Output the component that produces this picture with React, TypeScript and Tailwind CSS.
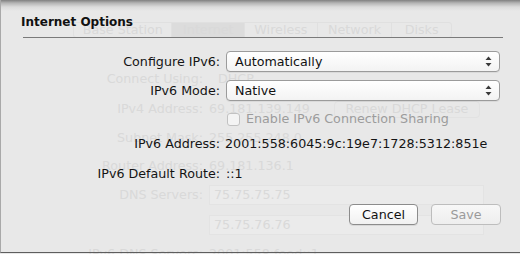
import React from 'react';

const ghost = "text-[#d9d9d9]";

function StepperArrows() {
  return (
    <svg width="7" height="11" viewBox="0 0 7 11" className="shrink-0">
      <path d="M3.5 0.5 L6.5 4 L0.5 4 Z" fill="#3a3a3a" />
      <path d="M3.5 10.5 L6.5 7 L0.5 7 Z" fill="#3a3a3a" />
    </svg>
  );
}

function PopUp({ value }: { value: string }) {
  return (
    <div className="ml-[6px] flex h-[21px] w-[274px] items-center justify-between rounded-[4px] border border-[#9b9b9b] bg-[linear-gradient(to_bottom,#ffffff,#f3f3f3)] pl-[8px] pr-[7px] shadow-[0_1px_0_rgba(0,0,0,0.06)]">
      <span className="text-[#111]">{value}</span>
      <StepperArrows />
    </div>
  );
}

function GhostRow({ label, children, className = "" }: { label: string; children: React.ReactNode; className?: string }) {
  return (
    <div className={`flex h-[20px] items-center ${className}`}>
      <div className={`w-[203px] text-right ${ghost}`}>{label}</div>
      <div className="ml-[6px] flex items-center">{children}</div>
    </div>
  );
}

// the window behind the sheet, faded out
function BackgroundWindow() {
  const tabs = [
    { name: "Base Station", w: "w-[99px]", on: false },
    { name: "Internet", w: "w-[73px]", on: true },
    { name: "Wireless", w: "w-[73px]", on: false },
    { name: "Network", w: "w-[75px]", on: false },
    { name: "Disks", w: "w-[59px]", on: false },
  ];
  return (
    <div className="flex flex-col pt-[22px] leading-[16px]">
      <div className="ml-[73px] flex h-[16px] w-[379px] overflow-hidden rounded-[3px] border border-[#e0e0e0]">
        {tabs.map((t) => (
          <div
            key={t.name}
            className={`${t.w} flex items-center justify-center border-r border-[#e0e0e0] last:border-r-0 ${t.on ? "bg-[#dcdcdc]" : ""} ${ghost}`}
          >
            {t.name}
          </div>
        ))}
      </div>
      <GhostRow label="Connect Using:" className="mt-[31px]">
        <span className={`ml-[9px] ${ghost}`}>DHCP</span>
      </GhostRow>
      <GhostRow label="IPv4 Address:" className="mt-[10px]">
        <span className={ghost}>69.181.139.149</span>
        <div className={`ml-[24px] flex h-[17px] w-[146px] items-center justify-center rounded-[4px] border border-[#e2e2e2] ${ghost}`}>
          Renew DHCP Lease
        </div>
      </GhostRow>
      <GhostRow label="Subnet Mask:" className="mt-[9px]">
        <span className={ghost}>255.255.248.0</span>
      </GhostRow>
      <GhostRow label="Router Address:" className="mt-[8px]">
        <span className={ghost}>69.181.136.1</span>
      </GhostRow>
      <GhostRow label="DNS Servers:" className="mt-[9px]">
        <div className={`flex h-[20px] w-[275px] items-center border border-[#e3e3e3] bg-[#ebebeb] pl-[4px] ${ghost}`}>75.75.75.75</div>
      </GhostRow>
      <GhostRow label="" className="mt-[10px]">
        <div className={`flex h-[20px] w-[275px] items-center border border-[#e3e3e3] bg-[#ebebeb] pl-[4px] ${ghost}`}>75.75.76.76</div>
      </GhostRow>
      <GhostRow label="IPv6 DNS Servers:" className="mt-[9px]">
        <span className={ghost}>2001:558:feed::1</span>
      </GhostRow>
    </div>
  );
}

export default function App() {
  return (
    <div className="relative h-[254px] w-[520px] overflow-hidden bg-[#e8e8e8] font-['DejaVu_Sans',sans-serif] text-[12.7px] text-[#141414]">
      <BackgroundWindow />

      {/* sheet */}
      <div className="absolute inset-x-0 top-0 h-[253px] border-b border-l border-b-[#5e5e5e] border-l-[#a9a9a9] bg-[linear-gradient(to_bottom,#808080_0px,#b4b4b4_3px,#dcdcdc_7px,rgba(232,232,232,0)_11px)]">
        <div className="flex flex-col leading-[16px]">
          <div className="pl-[20px] pt-[14px] text-[12px] font-bold text-[#111]">Internet Options</div>
          <div className="ml-[22px] mt-[7px] w-[480px] border-t border-[#7a7a7a]" />

          <div className="mt-[13px] flex items-center">
            <div className="w-[219px] text-right">Configure IPv6:</div>
            <PopUp value="Automatically" />
          </div>
          <div className="mt-[8px] flex items-center">
            <div className="w-[219px] text-right">IPv6 Mode:</div>
            <PopUp value="Native" />
          </div>

          <div className="mt-[11px] flex h-[14px] items-center pl-[226px]">
            <div className="h-[13px] w-[13px] rounded-[3px] border border-[#c2c2c2] bg-[#f4f4f4]" />
            <span className="ml-[6px] text-[#9c9c9c]">Enable IPv6 Connection Sharing</span>
          </div>

          <div className="mt-[10px] flex items-center">
            <div className="w-[219px] text-right">IPv6 Address:</div>
            <span className="ml-[5px]">2001:558:6045:9c:19e7:1728:5312:851e</span>
          </div>
          <div className="mt-[14px] flex items-center">
            <div className="w-[219px] text-right">IPv6 Default Route:</div>
            <span className="ml-[6px]">::1</span>
          </div>

          <div className="mt-[22px] flex justify-end gap-[13px] pr-[19px]">
            <button className="flex h-[21px] w-[69px] items-center justify-center rounded-[4px] border border-[#8c8c8c] bg-[linear-gradient(to_bottom,#ffffff,#f1f1f1)] text-[#111] shadow-[0_1px_0_rgba(0,0,0,0.08)]">
              Cancel
            </button>
            <button className="flex h-[21px] w-[70px] items-center justify-center rounded-[4px] border border-[#bdbdbd] bg-[linear-gradient(to_bottom,#f7f7f7,#eeeeee)] text-[#9a9a9a]">
              Save
            </button>
          </div>
        </div>
      </div>
    </div>
  );
}
